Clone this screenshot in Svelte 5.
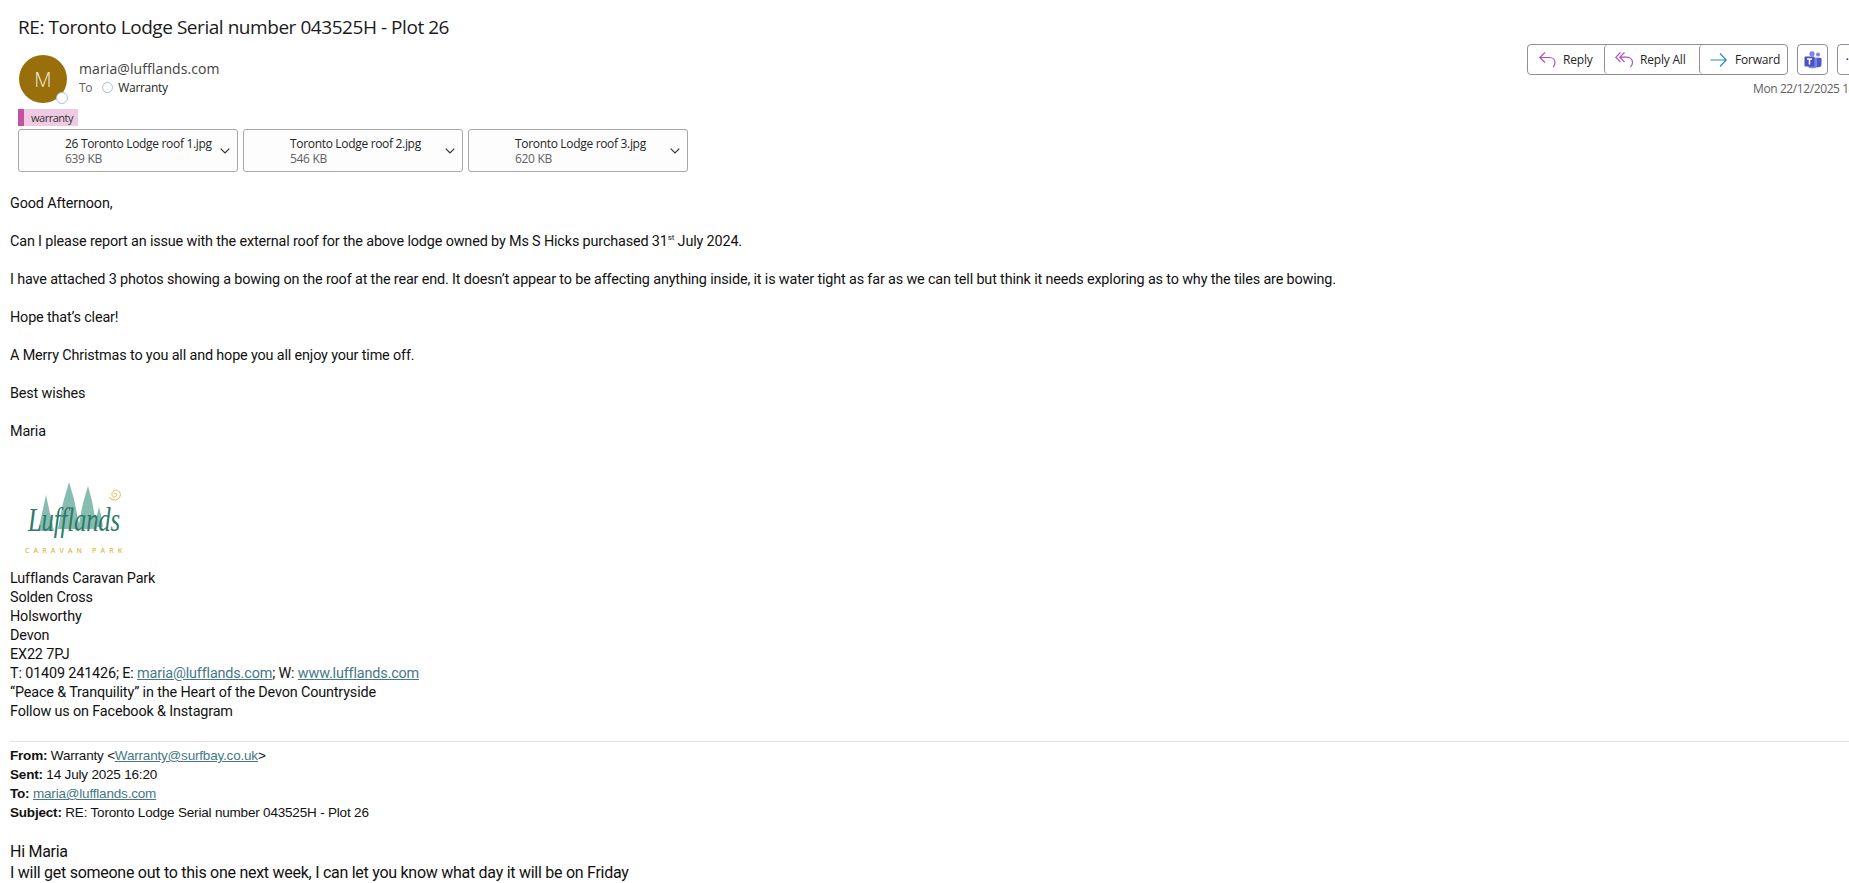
<script>
	const attachments = [
		{ name: '26 Toronto Lodge roof 1.jpg', size: '639 KB' },
		{ name: 'Toronto Lodge roof 2.jpg', size: '546 KB' },
		{ name: 'Toronto Lodge roof 3.jpg', size: '620 KB' }
	]
	const address = ['Lufflands Caravan Park', 'Solden Cross', 'Holsworthy', 'Devon', 'EX22 7PJ']
</script>

<div class="page">
	<h1 class="subject">RE: Toronto Lodge Serial number 043525H - Plot 26</h1>

	<div class="head">
		<div class="avatar">
			M
			<span class="presence"></span>
		</div>
		<div class="who">
			<div class="sender">maria@lufflands.com</div>
			<div class="to">To <span class="dot"></span> <span class="rcpt">Warranty</span></div>
		</div>
		<div class="actions">
			<div class="buttons">
				<div class="group">
					<button class="reply">
						<svg width="20" height="20" viewBox="0 0 20 20" fill="none" stroke="#b04dbd" stroke-width="1.2"><path d="M7 2.500 1.800 7.500 7 12.500M1.800 7.500h9.700c3.500 0 5.500 2.300 5.500 5 0 2.200-1 3.700-2 4.700" /></svg>
						Reply
					</button>
					<button class="replyall">
						<svg width="20" height="20" viewBox="0 0 20 20" fill="none" stroke="#b04dbd" stroke-width="1.2"><path d="M5.500 2.500.8 7.200l4.700 5M9.500 2.500 4.800 7.200l4.700 5M4.800 7.200h7.200c3.500 0 5.500 2.500 5.500 5.300 0 2.200-1 3.700-2 4.700" /></svg>
						Reply All
					</button>
					<button class="forward">
						<svg width="20" height="20" viewBox="0 0 20 20" fill="none" stroke="#2b88c9" stroke-width="1.2"><path d="M10 3.500 16.200 10 10 16.500M16.200 10H.5" /></svg>
						Forward
					</button>
				</div>
				<button class="teams" aria-label="Teams">
					<svg width="18" height="18" viewBox="0 0 18 18">
						<circle cx="14" cy="3.600" r="2" fill="#7b83eb" />
						<circle cx="8" cy="2.800" r="2.600" fill="#7b83eb" />
						<path d="M11.500 6.800h5a1 1 0 0 1 1 1v5.500a3 3 0 0 1-3 3h-3z" fill="#5059c9" />
						<path d="M4 6.800h9v7.700a3.200 3.200 0 0 1-3.200 2.800H7.200A3.200 3.200 0 0 1 4 14z" fill="#7b83eb" />
						<rect x="0.500" y="5.500" width="10" height="10" rx="1" fill="#4b53bc" />
						<path d="M3 8h5M5.500 8v5.500" stroke="#fff" stroke-width="1.500" fill="none" />
					</svg>
				</button>
				<button class="more">•••</button>
			</div>
			<div class="date">Mon 22/12/2025 14:12</div>
		</div>
	</div>

	<div class="tag"><span>warranty</span></div>

	<div class="files">
		{#each attachments as file}
			<div class="file">
				<div class="meta">
					<div class="fname">{file.name}</div>
					<div class="fsize">{file.size}</div>
				</div>
				<svg class="chev" width="10" height="6" viewBox="0 0 10 6" fill="none" stroke="#333" stroke-width="1.200"><path d="M.7.7 5 5 9.300.7" /></svg>
			</div>
		{/each}
	</div>

	<div class="body">
		<p>Good Afternoon,</p>
		<p>Can I please report an issue with the external roof for the above lodge owned by Ms S Hicks purchased 31<sup>st</sup> July 2024.</p>
		<p>I have attached 3 photos showing a bowing on the roof at the rear end. It doesn’t appear to be affecting anything inside, it is water tight as far as we can tell but think it needs exploring as to why the tiles are bowing.</p>
		<p>Hope that’s clear!</p>
		<p>A Merry Christmas to you all and hope you all enjoy your time off.</p>
		<p>Best wishes</p>
		<p>Maria</p>

		<svg class="logo" width="110" height="96" viewBox="0 0 110 96">
			<g fill="#86bdb0">
				<path d="M13 58 18 36 21 22 24 36 29 58z" />
				<path d="M33 56 38 30 44 9 49 26 55 56z" />
				<path d="M53 56 58 30 63 13 67 28 72 56z" />
				<path d="M70 54 72 42 74 34 76 42 78 54z" />
			</g>
			<text x="3" y="58" class="logoword" textLength="92" lengthAdjust="spacingAndGlyphs">Lufflands</text>
			<text x="0" y="80" class="logosub" textLength="97">CARAVAN PARK</text>
			<path d="M89 20.500c2-1 3.500 1.500 1.500 3s-4-.5-3.500-3 4-4.500 6.500-2.500 2.500 6-.5 8-7.500 1-8.500-2" fill="none" stroke="#e3b84a" stroke-width="1" />
		</svg>

		<div class="sig">
			{#each address as line}<div>{line}</div>{/each}
			<div>T: 01409 241426; E: <a href="#m">maria@lufflands.com</a>; W: <a href="#w">www.lufflands.com</a></div>
			<div>“Peace &amp; Tranquility” in the Heart of the Devon Countryside</div>
			<div>Follow us on Facebook &amp; Instagram</div>
		</div>
	</div>

	<hr />

	<div class="quoted">
		<div><b>From:</b> Warranty &lt;<a href="#r">Warranty@surfbay.co.uk</a>&gt;</div>
		<div><b>Sent:</b> 14 July 2025 16:20</div>
		<div><b>To:</b> <a href="#t">maria@lufflands.com</a></div>
		<div><b>Subject:</b> RE: Toronto Lodge Serial number 043525H - Plot 26</div>
	</div>

	<div class="reply-text">
		<div>Hi Maria</div>
		<div>I will get someone out to this one next week, I can let you know what day it will be on Friday</div>
	</div>
</div>

<style>
	:global(body) {
		background: #fff;
		overflow: hidden;
	}
	.page {
		width: 1849px;
		height: 883px;
		overflow: hidden;
		color: #1a1a1a;
		font-family: 'Open Sans', sans-serif;
		box-sizing: border-box;
	}
	.subject {
		margin: 0;
		padding: 14px 0 0 18px;
		font-size: 19px;
		line-height: 27px;
		font-weight: 400;
		letter-spacing: -0.45px;
	}
	.head {
		display: flex;
		width: 1960px;
		margin-top: 14px;
		padding-left: 19px;
		box-sizing: border-box;
	}
	.avatar {
		position: relative;
		width: 48px;
		height: 48px;
		border-radius: 50%;
		background: #986f0b;
		color: #f3ead6;
		display: flex;
		align-items: center;
		justify-content: center;
		font-size: 20px;
		font-weight: 300;
		flex: none;
	}
	.presence {
		position: absolute;
		right: -1px;
		bottom: -1px;
		border-radius: 50%;
		background: #fff;
		border: 1.5px solid #a9c3d6;
		width: 10px;
		height: 10px;
	}
	.who {
		margin-left: 12px;
		flex: none;
	}
	.sender {
		font-size: 14px;
		line-height: 20px;
		color: #424242;
		margin-top: 4px;
		letter-spacing: 0.1px;
	}
	.to {
		font-size: 12px;
		line-height: 17px;
		color: #616161;
		display: flex;
		align-items: center;
		letter-spacing: -0.3px;
	}
	.dot {
		width: 9px;
		height: 9px;
		border: 1px solid #a9c3d6;
		border-radius: 50%;
		margin: 0 5px 0 10px;
	}
	.rcpt {
		color: #242424;
	}
	.actions {
		margin-left: auto;
		margin-top: -11px;
		width: 433px;
		flex: none;
	}
	.buttons {
		display: flex;
		gap: 9px;
	}
	button {
		font-family: inherit;
		font-size: 12px;
		letter-spacing: -0.2px;
		color: #242424;
		background: #fff;
		border: 0;
		padding: 0;
		height: 100%;
		display: flex;
		align-items: center;
	}
	.group {
		display: flex;
		width: 261px;
		height: 31px;
		box-sizing: border-box;
		border: 1px solid #8f8f8f;
		border-radius: 4px;
	}
	.group button {
		gap: 5px;
		padding-left: 10px;
		box-sizing: border-box;
		background: transparent;
		border-radius: 4px;
	}
	.reply {
		width: 76px;
	}
	.replyall {
		width: 95px;
		border-left: 1px solid #8f8f8f;
	}
	.forward {
		flex: 1;
		border-left: 1px solid #8f8f8f;
	}
	.teams,
	.more {
		width: 31px;
		height: 31px;
		border: 1px solid #8f8f8f;
		border-radius: 4px;
		box-sizing: border-box;
		justify-content: center;
	}
	.more {
		justify-content: flex-start;
		padding-left: 8px;
		font-size: 7px;
		letter-spacing: 1px;
	}
	.date {
		font-size: 12px;
		line-height: 17px;
		color: #616161;
		margin-top: 5px;
		margin-left: 226px;
		letter-spacing: -0.4px;
	}
	.tag {
		margin: 6px 0 0 18px;
		width: 60px;
		height: 17px;
		box-sizing: border-box;
		border-left: 6px solid #c6519e;
		background: #eecbe3;
		font-size: 11px;
		line-height: 17px;
		padding-left: 7px;
		color: #333;
		white-space: nowrap;
		letter-spacing: -0.5px;
	}
	.files {
		display: flex;
		gap: 5px;
		margin: 3px 0 0 18px;
	}
	.file {
		width: 220px;
		height: 43px;
		box-sizing: border-box;
		border: 1px solid #a8a8a8;
		border-radius: 3px;
		background: #fdfdfd;
		display: flex;
		align-items: center;
		padding-left: 46px;
		padding-top: 1px;
	}
	.meta {
		flex: 1;
		font-size: 12px;
		line-height: 15.5px;
		white-space: nowrap;
		letter-spacing: -0.32px;
	}
	.fname {
		color: #242424;
	}
	.fsize {
		color: #616161;
	}
	.chev {
		margin-right: 7px;
		flex: none;
	}
	.body {
		margin-top: 22px;
		padding-left: 10px;
		font-family: Roboto, sans-serif;
		font-size: 14.4px;
		letter-spacing: -0.15px;
		line-height: 19px;
		color: #111;
	}
	.body p {
		margin: 0 0 19px;
	}
	sup {
		font-size: 8px;
		line-height: 0;
	}
	.logo {
		display: block;
		margin: 32px 0 0 15px;
	}
	.logoword {
		font-family: 'Liberation Serif', serif;
		font-style: italic;
		font-size: 34px;
		fill: #2d7a68;
	}
	.logosub {
		font-family: 'Open Sans', sans-serif;
		font-size: 7px;
		font-weight: 600;
		fill: #e3b84a;
	}
	a {
		color: #467886;
		text-decoration: underline;
	}
	hr {
		margin: 20px 0 0 10px;
		border: 0;
		border-top: 1px solid #e1e1e1;
	}
	.quoted {
		margin: 4px 0 0 10px;
		font-family: 'Liberation Sans', sans-serif;
		font-size: 13.5px;
		letter-spacing: -0.19px;
		line-height: 19px;
		color: #111;
	}
	.reply-text {
		margin: 20px 0 0 10px;
		font-family: Roboto, sans-serif;
		font-size: 16px;
		letter-spacing: -0.27px;
		line-height: 20.5px;
		color: #111;
	}
</style>
